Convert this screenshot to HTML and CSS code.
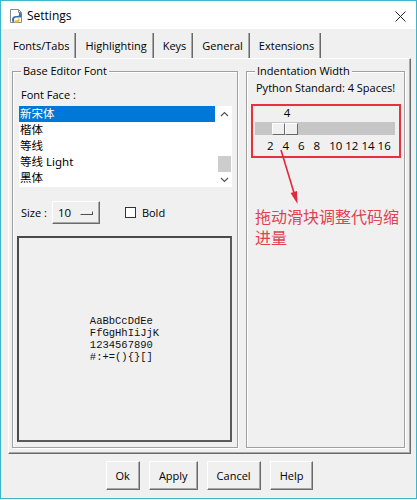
FILE: index.html
```html
<!DOCTYPE html>
<html>
<head>
<meta charset="utf-8">
<title>Settings</title>
<link rel="stylesheet" href="styles.css">
</head>
<body>
<div class="window">
  <div class="titlebar">
    <svg class="app-icon" width="16" height="16" viewBox="0 0 16 16">
      <path d="M2.5 1.5h8l3 3v10h-11z" fill="#fff" stroke="#8a8a8a"/>
      <path d="M10.5 1.5v3h3" fill="none" stroke="#8a8a8a"/>
      <path d="M4 12c0-3 1.5-4 4-4h1.5c1 0 1.5-.6 1.5-1.5V5h1.2c.8 0 1.3.8 1.3 2.2S13 9.5 12 9.5H8.5C7 9.5 6 10.3 6 12v2H4.5z" fill="#3b6fb6"/>
      <path d="M6.5 14.5h3c1.2 0 2-.7 2-2v-2H10c0 1.2-.6 1.8-1.8 1.8H6.5z" fill="#f2c230"/>
    </svg>
    <span class="title">Settings</span>
    <svg class="close" width="11" height="11" viewBox="0 0 11 11">
      <path d="M.5 .5l10 10M10.5 .5l-10 10" stroke="#222" stroke-width="1"/>
    </svg>
  </div>

  <div class="client">
    <div class="tabs">
      <div class="tab active">Fonts/Tabs</div>
      <div class="tab">Highlighting</div>
      <div class="tab">Keys</div>
      <div class="tab">General</div>
      <div class="tab">Extensions</div>
    </div>

    <div class="page">
      <fieldset class="frame font-frame">
        <legend>Base Editor Font</legend>
        <div class="frame-body">
          <div class="field-label">Font Face :</div>
          <div class="listbox">
            <ul class="items">
              <li class="selected">新宋体</li>
              <li>楷体</li>
              <li>等线</li>
              <li>等线 Light</li>
              <li>黑体</li>
            </ul>
            <div class="scrollbar">
              <span class="sb-arrow">
                <svg width="9" height="6" viewBox="0 0 9 6"><path d="M1 5l3.5-3.5L8 5" fill="none" stroke="#555" stroke-width="1.2"/></svg>
              </span>
              <span class="sb-track"><span class="sb-thumb"></span></span>
              <span class="sb-arrow">
                <svg width="9" height="6" viewBox="0 0 9 6"><path d="M1 1l3.5 3.5L8 1" fill="none" stroke="#555" stroke-width="1.2"/></svg>
              </span>
            </div>
          </div>

          <div class="size-row">
            <span class="field-label inline">Size :</span>
            <span class="menubutton">10<span class="indicator"></span></span>
            <span class="checkbox"></span>
            <span class="check-label">Bold</span>
          </div>

          <div class="preview">
            <pre class="sample">AaBbCcDdEe
FfGgHhIiJjK
1234567890
#:+=(){}[]</pre>
          </div>
        </div>
      </fieldset>

      <fieldset class="frame indent-frame">
        <legend>Indentation Width</legend>
        <div class="frame-body">
          <div class="python-std">Python Standard: 4 Spaces!</div>
          <div class="scale-box">
            <div class="scale-value" style="margin-left: 19px">4</div>
            <div class="trough">
              <div class="slider" style="margin-left: 17px"><span></span><span></span></div>
            </div>
            <div class="ticks">2   4   6   8   10 12 14 16</div>
          </div>
          <div class="note">拖动滑块调整代码缩进量</div>
        </div>
      </fieldset>
    </div>

    <div class="buttons">
      <span class="button">Ok</span>
      <span class="button">Apply</span>
      <span class="button">Cancel</span>
      <span class="button">Help</span>
    </div>
  </div>

  <svg class="annot-arrow" width="40" height="66" viewBox="0 0 40 66">
    <path d="M10 4L22.9 46.5" stroke="#e2283a" stroke-width="1.6" fill="none"/>
    <path d="M26.5 58L19.6 46.9L26 45.1z" fill="#e2283a"/>
  </svg>
</div>
</body>
</html>
```

FILE: styles.css
```css
* {
  box-sizing: border-box;
}

html, body {
  margin: 0;
  padding: 0;
  background: #fff;
}

body {
  font-family: "Open Sans", "Noto Sans", "Noto Sans CJK SC", sans-serif;
  font-size: 11px;
  color: #000;
}

.window {
  position: relative;
  width: 417px;
  height: 499px;
  border: 1px solid #3db6ca;
  background: #f0f0f0;
}

.titlebar {
  height: 28px;
  background: #fff;
  display: flex;
  align-items: center;
  padding-left: 7px;
}

.app-icon {
  display: block;
  margin-top: 1px;
}

.title {
  margin-left: 3px;
  font-size: 12px;
}

.close {
  margin-left: auto;
  margin-right: 10px;
  margin-top: 2px;
}

.client {
  padding: 4px 5px 0 7px;
}

.tabs {
  display: flex;
  height: 25px;
}

.tab {
  line-height: 25px;
  padding: 0 6px 0 5px;
  border-right: 1px solid #6a6a6a;
  box-shadow: inset -1px 0 0 #a8a8a8;
  margin-right: 4px;
}

.page {
  height: 396px;
  border: 1px solid;
  border-color: #fff #6a6a6a #6a6a6a #fff;
  box-shadow: inset -1px -1px 0 #a8a8a8;
  padding: 4px 5px 5px 3px;
  display: grid;
  grid-template-columns: 226px 1fr;
  column-gap: 8px;
}

.frame {
  margin: 0;
  min-width: 0;
  border: 1px solid #a0a0a0;
  box-shadow: 1px 1px 0 #fff, inset 1px 1px 0 #fff;
  padding: 0 5px 4px 4px;
}

.frame legend {
  margin-left: 4px;
  padding: 0 2px;
  line-height: 16px;
  background: #f0f0f0;
}

.font-frame {
  padding: 0 5px 4px 4px;
}

.indent-frame {
  padding: 0 3px 4px 4px;
}

.frame-body {
  display: flex;
  flex-direction: column;
}

.field-label {
  padding-left: 4px;
  line-height: 16px;
  margin-top: 8px;
}

.field-label.inline {
  margin-top: 0;
}

.listbox {
  margin-top: 3px;
  margin-left: 2px;
  height: 81px;
  display: flex;
  background: #fff;
}

.items {
  list-style: none;
  margin: 0;
  padding: 0;
  flex: 1;
  font-family: "Noto Sans", "Noto Sans CJK SC", sans-serif;
  font-size: 11.5px;
}

.items li {
  height: 16px;
  line-height: 16px;
  padding-left: 1px;
  margin-right: 2px;
}

.items li.selected {
  background: #0078d7;
  color: #fff;
}

.scrollbar {
  width: 15px;
  display: flex;
  flex-direction: column;
  background: #fff;
}

.sb-arrow {
  height: 15px;
  display: flex;
  align-items: center;
  justify-content: center;
}

.sb-track {
  flex: 1;
  display: flex;
  flex-direction: column;
  justify-content: flex-end;
  padding: 0 1px;
}

.sb-thumb {
  height: 16px;
  background: #cdcdcd;
}

.size-row {
  margin-top: 14px;
  height: 23px;
  display: flex;
  align-items: center;
}

.menubutton {
  margin-left: 5px;
  width: 48px;
  height: 23px;
  display: flex;
  align-items: center;
  padding: 0 6px 0 5px;
  border: 1px solid;
  border-color: #fff #6a6a6a #6a6a6a #fff;
  box-shadow: inset -1px -1px 0 #a8a8a8;
  font-size: 11.5px;
}

.indicator {
  margin-left: auto;
  width: 13px;
  height: 4px;
  border: 1px solid;
  border-color: #f8f8f8 #505050 #505050 #f8f8f8;
  margin-top: 1px;
}

.checkbox {
  margin-left: 25px;
  width: 11px;
  height: 11px;
  background: #fff;
  border: 1px solid #333;
}

.check-label {
  margin-left: 6px;
}

.preview {
  margin-top: 12px;
  height: 206px;
  border: 2px solid;
  border-color: #4a4a4a #5a5a5a #5a5a5a #4a4a4a;
  display: flex;
  align-items: center;
  justify-content: center;
}

.sample {
  margin: 0;
  font-family: "Liberation Mono", monospace;
  font-size: 10.5px;
  line-height: 12px;
  color: #111;
}

.python-std {
  margin-top: 1px;
  padding-left: 5px;
  line-height: 16px;
  white-space: nowrap;
}

.scale-box {
  margin-top: 8px;
  height: 54px;
  border: 2px solid #e5323c;
  padding: 0 4px 0 2px;
  display: flex;
  flex-direction: column;
}

.scale-value {
  width: 26px;
  text-align: center;
  line-height: 14px;
  font-size: 11.5px;
}

.trough {
  margin-top: 2px;
  height: 13px;
  background: #c6c6c6;
  padding-top: 1px;
}

.slider {
  width: 26px;
  height: 12px;
  display: flex;
}

.slider span {
  flex: 1;
  background: #f0f0f0;
  border: 1px solid;
  border-color: #fff #6a6a6a #6a6a6a #fff;
}

.ticks {
  margin-top: 4px;
  padding-left: 12px;
  line-height: 14px;
  font-size: 11.5px;
  white-space: pre;
}

.note {
  margin-top: 48px;
  margin-left: 4px;
  width: 146px;
  font-family: "Noto Sans CJK SC", sans-serif;
  font-size: 16px;
  line-height: 21px;
  color: #e4404f;
}

.buttons {
  margin-top: 7px;
  display: flex;
  justify-content: center;
  gap: 9px;
}

.button {
  height: 29px;
  padding: 0 9px;
  display: flex;
  align-items: center;
  border: 1px solid;
  border-color: #fff #6a6a6a #6a6a6a #fff;
  box-shadow: inset -1px -1px 0 #a8a8a8;
}

.annot-arrow {
  position: absolute;
  left: 270px;
  top: 145px;
}
```
